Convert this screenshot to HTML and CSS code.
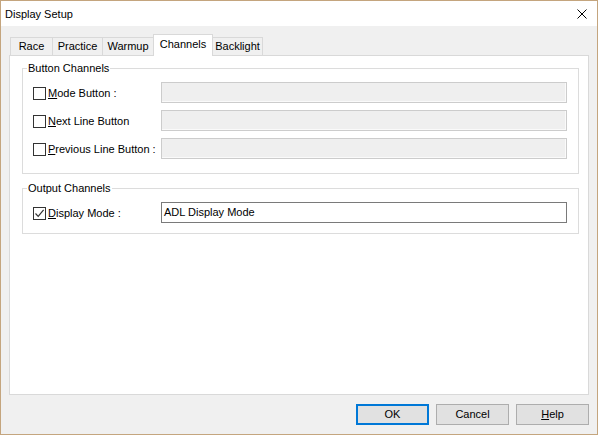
FILE: index.html
```html
<!DOCTYPE html>
<html>
<head>
<meta charset="utf-8">
<title>Display Setup</title>
<link rel="stylesheet" href="styles.css">
</head>
<body>
<div class="window">
  <div class="titlebar">
    <span class="title">Display Setup</span>
    <svg class="close" width="10" height="10" viewBox="0 0 10 10"><path d="M0.5 0.5 L9.5 9.5 M9.5 0.5 L0.5 9.5" stroke="#000" stroke-width="1" fill="none"/></svg>
  </div>
  <div class="content">
    <div class="tabs">
      <div class="tab t-race">Race</div>
      <div class="tab t-practice">Practice</div>
      <div class="tab t-warmup">Warmup</div>
      <div class="tab t-channels selected">Channels</div>
      <div class="tab t-backlight">Backlight</div>
    </div>
    <div class="panel">
      <fieldset class="group g-buttons">
        <legend>Button Channels</legend>
        <div class="row">
          <label class="chk"><span class="box"></span><span class="lbl"><u>M</u>ode Button :</span></label>
          <div class="field disabled"></div>
        </div>
        <div class="row">
          <label class="chk"><span class="box"></span><span class="lbl"><u>N</u>ext Line Button</span></label>
          <div class="field disabled"></div>
        </div>
        <div class="row">
          <label class="chk"><span class="box"></span><span class="lbl"><u>P</u>revious Line Button :</span></label>
          <div class="field disabled"></div>
        </div>
      </fieldset>
      <fieldset class="group g-output">
        <legend>Output Channels</legend>
        <div class="row">
          <label class="chk"><span class="box"><svg width="11" height="11" viewBox="0 0 11 11"><path d="M1.5 5.5 L4.2 8.3 L9.6 1.8" stroke="#333" stroke-width="1.2" fill="none"/></svg></span><span class="lbl"><u>D</u>isplay Mode :</span></label>
          <div class="field enabled">ADL Display Mode</div>
        </div>
      </fieldset>
    </div>
    <div class="buttons">
      <div class="btn default">OK</div>
      <div class="btn">Cancel</div>
      <div class="btn"><u>H</u>elp</div>
    </div>
  </div>
</div>
</body>
</html>
```

FILE: styles.css
```css
* { box-sizing: border-box; }
html, body { margin: 0; padding: 0; }
body {
  font-family: "Liberation Sans", Arial, sans-serif;
  font-size: 11px;
  color: #000;
  background: #f0f0f0;
}
.window {
  width: 598px;
  height: 435px;
  border: 1px solid #c4a57e;
  background: #f0f0f0;
  display: flex;
  flex-direction: column;
}
.titlebar {
  height: 25px;
  background: #fff;
  display: flex;
  align-items: center;
  justify-content: space-between;
  padding: 0 10px 0 4px;
  flex: none;
}
.title { font-size: 11px; line-height: 14px; }
.close { display: block; margin-top: 1px; }

.content {
  flex: 1;
  padding: 8px 8px 0 8px;
  display: flex;
  flex-direction: column;
}
.tabs {
  display: flex;
  align-items: flex-end;
  height: 21px;
  padding-left: 1px;
  flex: none;
}
.tab {
  height: 18px;
  border: 1px solid #d9d9d9;
  border-bottom: none;
  background: #f0f0f0;
  text-align: center;
  line-height: 16px;
  margin-left: -1px;
}
.t-race { width: 43px; margin-left: 0; }
.t-practice { width: 51px; }
.t-warmup { width: 52px; }
.t-channels { width: 60px; }
.t-backlight { width: 51px; }
.tab.selected {
  height: 22px;
  background: #fff;
  margin-bottom: -1px;
  position: relative;
  z-index: 1;
  line-height: 18px;
}
.panel {
  height: 340px;
  flex: none;
  border: 1px solid #d9d9d9;
  background: #fff;
  padding: 5px 9px 0 12px;
}
.group {
  margin: 0;
  border: 1px solid #dcdcdc;
  padding: 7px 11px 14px 10px;
  display: flex;
  flex-direction: column;
  gap: 7px;
  min-width: 0;
}
.group legend {
  padding: 0 1px;
  margin-left: -6px;
  line-height: 14px;
  font-size: 11px;
}
.g-output {
  margin-top: 7px;
  padding-bottom: 10px;
}
.row {
  display: flex;
  align-items: center;
  height: 21px;
}
.chk {
  width: 128px;
  flex: none;
  display: flex;
  align-items: center;
}
.box {
  width: 13px;
  height: 13px;
  border: 1px solid #333;
  background: #fff;
  flex: none;
  display: flex;
  align-items: center;
  justify-content: center;
  margin-top: 1px;
}
.box svg { display: block; }
.lbl { margin-left: 2px; white-space: nowrap; }
.field {
  flex: 1;
  height: 21px;
  line-height: 19px;
  padding-left: 2px;
}
.field.disabled {
  border: 1px solid #cccccc;
  background: #efefef;
  box-shadow: inset -1px -1px 0 #fafafa;
}
.field.enabled {
  border: 1px solid #7a7a7a;
  background: #fff;
}
.buttons {
  margin-top: 9px;
  display: flex;
  justify-content: flex-end;
  gap: 7px;
}
.btn {
  width: 73px;
  height: 21px;
  border: 1px solid #adadad;
  background: #e1e1e1;
  text-align: center;
  line-height: 19px;
}
.btn.default {
  border: 2px solid #0078d7;
  line-height: 17px;
}
```
